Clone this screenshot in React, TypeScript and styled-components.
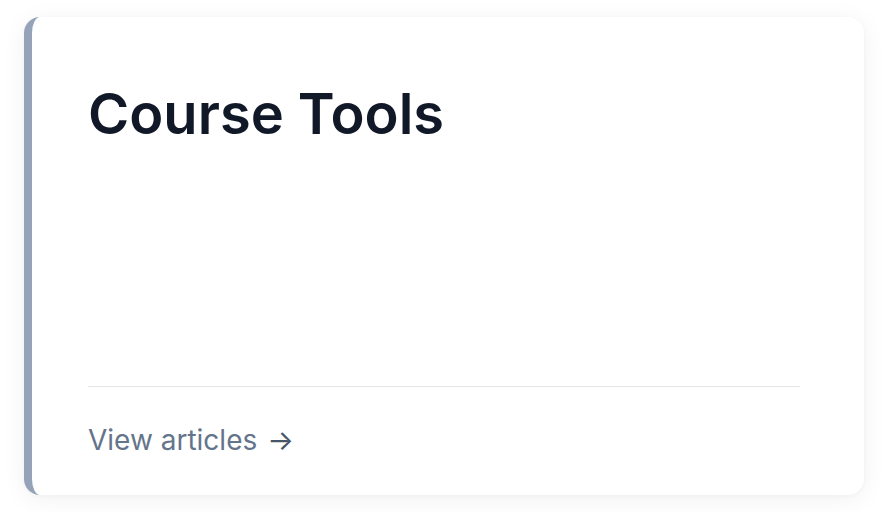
import React from "react";
import styled, { createGlobalStyle } from "styled-components";

const GlobalStyle = createGlobalStyle`
  body {
    margin: 0;
    background: #ffffff;
    font-family: Inter, "Noto Sans", sans-serif;
  }
`;

const Page = styled.div`
  padding: 17px 24px;
`;

const Card = styled.article`
  display: flex;
  flex-direction: column;
  box-sizing: border-box;
  width: 840px;
  height: 478px;
  padding: 64px 64px 34px 56px;
  border-left: 8px solid #94a3b8;
  border-radius: 16px;
  background-color: #ffffff;
  box-shadow: 0 4px 24px rgba(15, 23, 42, 0.06), 0 1px 4px rgba(15, 23, 42, 0.03);
`;

const Title = styled.h2`
  margin: 0;
  font-size: 56px;
  line-height: 1.2;
  font-weight: 600;
  letter-spacing: 0;
  color: #111827;
`;

const Footer = styled.footer`
  margin-top: auto;
  padding-top: 32px;
  border-top: 1px solid #e5e7eb;
`;

const Link = styled.a`
  display: inline-flex;
  align-items: center;
  gap: 10px;
  font-size: 28px;
  line-height: 1.5;
  color: #64748b;
  text-decoration: none;
  cursor: pointer;
`;

const Arrow = styled.span`
  color: #475569;
`;

export default function App() {
  return (
    <>
      <GlobalStyle />
      <Page>
        <Card>
          <Title>Course Tools</Title>
          <Footer>
            <Link>
              View articles <Arrow>→</Arrow>
            </Link>
          </Footer>
        </Card>
      </Page>
    </>
  );
}
